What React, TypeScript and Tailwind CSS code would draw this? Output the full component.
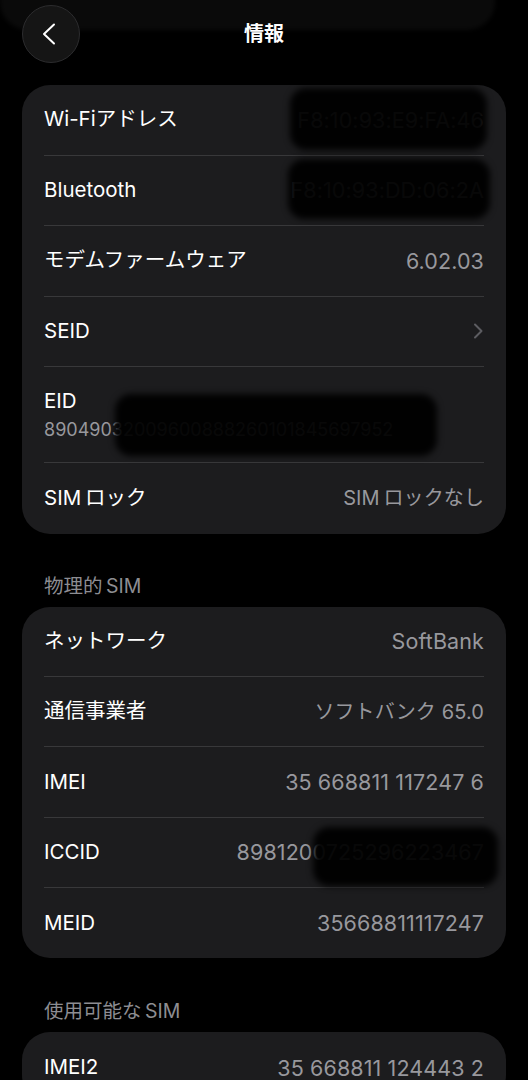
import React from 'react'

interface Redact {
  left: number
  top: number
  width: number
  height: number
}

interface RowProps {
  label: string
  value?: string
  chevron?: boolean
  last?: boolean
  h?: string
  redact?: Redact
}

// black smudge painted over private values
const Smudge: React.FC<{ r: Redact }> = ({ r }) => (
  <div
    className="absolute rounded-[16px] bg-black/95 blur-[3px]"
    style={{ left: r.left, top: r.top, width: r.width, height: r.height }}
  />
)

const Row: React.FC<RowProps> = ({ label, value, chevron, last, h = 'h-[70.5px]', redact }) => {
  // kana values render a bit smaller so they take the same width as on the phone
  const kana = value ? /[\u3040-\u30ff]/.test(value) : false
  return (
    <div className={`relative flex items-center justify-between ${h} ${last ? '' : 'border-b border-[#38383a]'}`}>
      <span className="text-[20.5px] text-white">{label}</span>
      {value && (
        <span className={`${kana ? 'text-[20px]' : 'text-[21.5px]'} tracking-[0.1px] text-[#98989d]`}>{value}</span>
      )}
      {chevron && (
        <svg width="10" height="16" viewBox="0 0 10 16" fill="none" className="mr-[1px]">
          <path d="M2 1.5 L8.5 8 L2 14.5" stroke="#5c5c61" strokeWidth="2" strokeLinecap="round" strokeLinejoin="round" />
        </svg>
      )}
      {redact && <Smudge r={redact} />}
    </div>
  )
}

const Card: React.FC<{ children: React.ReactNode }> = ({ children }) => (
  <div className="mx-[22px] rounded-[28px] bg-[#1c1c1e] px-[22px]">{children}</div>
)

const SectionTitle: React.FC<{ title: string; pt: string }> = ({ title, pt }) => (
  <div className={`${pt} pb-[9px] px-[44px] text-[19.5px] leading-[24px] text-[#8d8d92]`}>{title}</div>
)

export default function App() {
  return (
    <div className="relative h-[1080px] overflow-hidden bg-black font-[Inter,'Noto_Sans_CJK_JP',sans-serif]">
      {/* content scrolled under the bar, blurred */}
      <div className="absolute left-0 right-[33px] top-[-50px] h-[80px] rounded-[28px] bg-[#0a0a0a] blur-[2px]" />

      <div className="relative flex h-[85px] items-start px-[22px] pt-[5px]">
        <button className="flex h-[58px] w-[58px] items-center justify-center rounded-full border border-[#2c2c2e] bg-[#151515]">
          <svg width="14" height="22" viewBox="0 0 14 22" fill="none" className="mr-[4px]">
            <path d="M12 1.5 L2 11 L12 20.5" stroke="#ffffff" strokeWidth="2" strokeLinecap="round" strokeLinejoin="round" />
          </svg>
        </button>
        <div className="absolute left-0 right-0 top-[21px] text-center text-[20px] font-bold leading-[26px] text-white">
          情報
        </div>
      </div>

      <Card>
        <Row label="Wi-Fiアドレス" value="F8:10:93:E9:FA:46" redact={{ left: 246, top: 3, width: 197, height: 62 }} />
        <Row label="Bluetooth" value="F8:10:93:DD:06:2A" redact={{ left: 244, top: 3, width: 202, height: 60 }} />
        <Row label="モデムファームウェア" value="6.02.03" />
        <Row label="SEID" chevron />
        <div className="relative flex h-[96px] flex-col justify-center border-b border-[#38383a]">
          <span className="text-[20.5px] leading-[28px] text-white">EID</span>
          <span className="mt-[3px] text-[18px] leading-[24px] text-[#98989d]">89049032009600888260101845697952</span>
          <Smudge r={{ left: 71, top: 27, width: 322, height: 62 }} />
        </div>
        <Row label={'SIM\u2009ロック'} value={'SIM\u2009ロックなし'} last />
      </Card>

      <SectionTitle title={'物理的\u2009SIM'} pt="pt-[40px]" />
      <Card>
        <Row h="h-[70.4px]" label="ネットワーク" value="SoftBank" />
        <Row h="h-[70.4px]" label="通信事業者" value="ソフトバンク 65.0" />
        <Row h="h-[70.4px]" label="IMEI" value="35 668811 117247 6" />
        <Row h="h-[70.4px]" label="ICCID" value="8981200725296223467" redact={{ left: 269, top: 9, width: 185, height: 59 }} />
        <Row h="h-[70.4px]" label="MEID" value="35668811117247" last />
      </Card>

      <SectionTitle title={'使用可能な\u2009SIM'} pt="pt-[41px]" />
      <Card>
        <Row label="IMEI2" value="35 668811 124443 2" last />
      </Card>
    </div>
  )
}
